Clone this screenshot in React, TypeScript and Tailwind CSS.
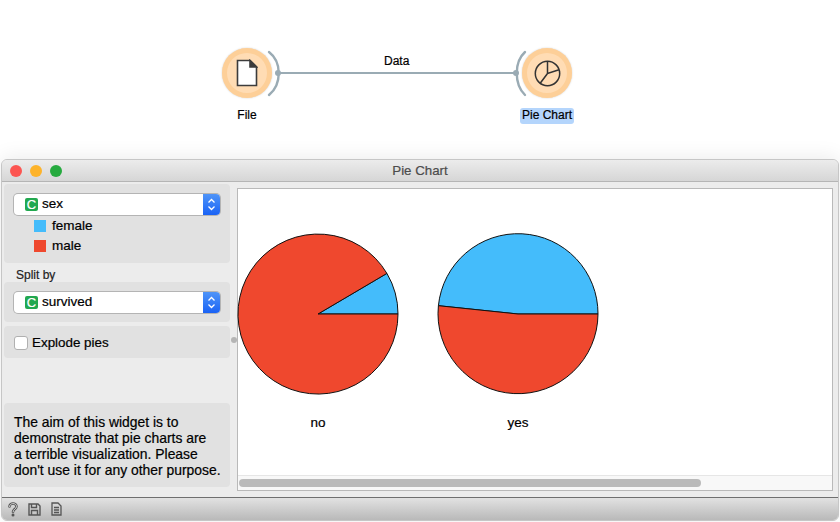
const sans = "font-['Liberation_Sans','Arial',sans-serif]";

function ComboBox({ label }: { label: string }) {
  return (
    <div className="flex h-[21px] rounded-[4px] bg-white shadow-[0_0_0_1px_#b4b4b4]">
      <div className="flex flex-1 items-center pl-[11px]">
        <span className="flex h-[13px] w-[13px] items-center justify-center rounded-[2px] bg-[#22a84f] text-[13px] leading-none text-white">
          C
        </span>
        <span className="-mt-[1px] ml-[4px] text-[13.5px] leading-none text-black">{label}</span>
      </div>
      <div className="flex w-[17px] items-center justify-center rounded-r-[4px] bg-gradient-to-b from-[#4f94f8] to-[#1a62f5]">
        <svg width="9" height="15" viewBox="0 0 9 15" fill="none" stroke="white" strokeWidth="1.3">
          <path d="M1.5 5.5 4.5 2.5 7.5 5.5" />
          <path d="M1.5 9.5 4.5 12.5 7.5 9.5" />
        </svg>
      </div>
    </div>
  );
}

function Node({ children, label, selected }: { children: React.ReactNode; label: string; selected?: boolean }) {
  return (
    <div className="flex w-[100px] flex-col items-center">
      <div className="flex h-[50px] w-[50px] items-center justify-center rounded-full bg-[#ffdcb4] shadow-[inset_0_0_0_5px_#fdcf98,0_0_2px_#cccccc]">
        {children}
      </div>
      <span
        className={`mt-[10px] rounded-[3px] px-[2px] text-[12px] leading-[15px] pb-[1px] text-black ${selected ? "bg-[#b4d5fc]" : ""}`}
      >
        {label}
      </span>
    </div>
  );
}

function Pie({ label, slice, male }: { label: string; slice: string; male: string }) {
  return (
    <div className="flex w-[162px] flex-col items-center">
      <svg width="162" height="162" viewBox="0 0 162 162">
        <path d={slice} fill="#44bcfb" stroke="#111" strokeWidth="1" />
        <path d={male} fill="#ef482e" stroke="#111" strokeWidth="1" />
      </svg>
      <span className="mt-[20px] text-[13.5px] leading-[16px] text-black">{label}</span>
    </div>
  );
}

export default function App() {
  return (
    <div className={`${sans} relative flex h-[522px] w-[840px] flex-col overflow-hidden bg-white [-webkit-text-stroke-width:0.2px]`}>
      {/* workflow canvas */}
      <div className="flex h-[159px] shrink-0 gap-[200px] pt-[48px] pl-[197px]">
        <div className="relative h-fit">
          <Node label="File">
            <svg width="22" height="28" viewBox="0 0 22 28" fill="#fff" stroke="#3c3c3c" strokeWidth="1.6">
              <path d="M1.5 1.5H14L20.5 8V26.5H1.5Z" />
              <path d="M14 1.5V8H20.5Z" fill="#3c3c3c" />
            </svg>
          </Node>
          <svg className="absolute left-[70px] top-[2px]" width="14" height="47" viewBox="0 0 14 47" fill="none" stroke="#9aabb4" strokeWidth="2.4" strokeLinecap="round">
            <path d="M2 2C15 12 15 34 2 45" />
          </svg>
        </div>
        <div className="relative h-fit">
          <Node label="Pie Chart" selected>
            <svg width="27" height="27" viewBox="0 0 27 27" fill="none" stroke="#333" strokeWidth="1.5">
              <circle cx="13.5" cy="13.5" r="12.2" />
              <path d="M13.5 1.3V13.5L25 9.8M13.5 13.5 6 23.5" />
            </svg>
          </Node>
          <svg className="absolute left-[16px] top-[2px]" width="14" height="47" viewBox="0 0 14 47" fill="none" stroke="#9aabb4" strokeWidth="2.4" strokeLinecap="round">
            <path d="M12 2C1 12 1 34 12 45" />
          </svg>
        </div>
      </div>

      {/* link between the two widgets */}
      <div className="absolute left-[278px] top-[72px] h-[2px] w-[238px] bg-[#9aabb4]" />
      <div className="absolute left-[275px] top-[70px] h-[6px] w-[6px] rounded-full bg-[#9aabb4]" />
      <div className="absolute left-[513px] top-[70px] h-[6px] w-[6px] rounded-full bg-[#9aabb4]" />
      <span className="absolute left-[384px] top-[54px] text-[12px] leading-[15px] text-black">Data</span>

      {/* widget window */}
      <div className="mx-[1px] flex h-[362px] shrink-0 flex-col overflow-hidden rounded-[6px] border border-[#c6c6c6] bg-[#ececec] shadow-[0_-2px_20px_rgba(0,0,0,0.08)]">
        <div className="relative flex h-[22px] shrink-0 items-center justify-center border-b border-[#b5b5b5] bg-gradient-to-b from-[#ececec] to-[#d6d6d6]">
          <div className="absolute left-[8px] top-[5px] flex gap-[8px]">
            <span className="h-[12px] w-[12px] rounded-full bg-[#fc5551]" />
            <span className="h-[12px] w-[12px] rounded-full bg-[#fdb32a]" />
            <span className="h-[12px] w-[12px] rounded-full bg-[#26aa3f]" />
          </div>
          <span className="text-[13.3px] leading-none text-[#4c4c4c]">Pie Chart</span>
        </div>

        <div className="flex min-h-0 flex-1">
          <div className="flex w-[228px] shrink-0 flex-col pt-[2px] pl-[2px]">
            <div className="h-[79px] rounded-[4px] bg-[#e1e1e1] px-[10px] pt-[10px]">
              <ComboBox label="sex" />
              <div className="mt-[1px] flex items-center pl-[20px] text-[13.5px] leading-[20px] text-black">
                <span className="mr-[6px] h-[12px] w-[12px] bg-[#44bcfb]" />
                female
              </div>
              <div className="flex items-center pl-[20px] text-[13.5px] leading-[20px] text-black">
                <span className="mr-[6px] h-[12px] w-[12px] bg-[#ef482e]" />
                male
              </div>
            </div>
            <div className="mt-[5px] pl-[12px] text-[12px] leading-[14px] text-[#222]">Split by</div>
            <div className="h-[40px] rounded-[4px] bg-[#e1e1e1] px-[10px] pt-[10px]">
              <ComboBox label="survived" />
            </div>
            <div className="mt-[4px] flex h-[32px] items-center rounded-[4px] bg-[#e1e1e1] pt-[2px] pl-[10px]">
              <span className="h-[14px] w-[14px] rounded-[3px] border border-[#b0b0b0] bg-white" />
              <span className="ml-[4px] text-[13.4px] text-black">Explode pies</span>
            </div>
            <div className="mt-auto mb-[10px] h-[84px] rounded-[4px] bg-[#e1e1e1] pl-[10px] pt-[11px] text-[13.9px] leading-[16px] text-black">
              The aim of this widget is to
              <br />
              demonstrate that pie charts are
              <br />
              a terrible visualization. Please
              <br />
              don't use it for any other purpose.
            </div>
          </div>

          <div className="flex w-[7px] shrink-0 items-center justify-center">
            <span className="h-[6px] w-[6px] rounded-full bg-[#b5b5b5]" />
          </div>

          <div className="mt-[6px] mb-[6px] flex min-w-0 flex-1 flex-col border border-[#b9b9b9] bg-white">
            <div className="flex flex-1 pt-[44px]">
              <div className="-ml-[1px] flex gap-[38px]">
                <Pie
                  label="no"
                  slice="M81 81H161A80 80 0 0 0 149.9 40.4Z"
                  male="M81 81L149.9 40.4A80 80 0 1 0 161 81Z"
                />
                <Pie
                  label="yes"
                  slice="M81 81H161A80 80 0 0 0 1.4 72.7Z"
                  male="M81 81L1.4 72.7A80 80 0 1 0 161 81Z"
                />
              </div>
            </div>
            <div className="flex h-[15px] shrink-0 items-center border-t border-[#e6e6e6] bg-[#f8f8f8] pl-[1px]">
              <span className="h-[8px] w-[462px] rounded-full bg-[#bababa]" />
            </div>
          </div>
          <div className="w-[5px] shrink-0" />
        </div>

        <div className="flex h-[23px] shrink-0 items-center border-t border-[#6f6f6f] bg-gradient-to-b from-[#e2e2e2] to-[#b9b9b9] pl-[6px]">
          <svg width="10" height="15" viewBox="0 0 10 15" fill="none" strokeLinecap="round">
            <path d="M1.5 4.5C1.5 0.5 8.5 0.5 8.5 4.5 8.5 7 5 7 5 10" stroke="#555" strokeWidth="2.6" />
            <path d="M1.5 4.5C1.5 0.5 8.5 0.5 8.5 4.5 8.5 7 5 7 5 10" stroke="#e0e0e0" strokeWidth="0.9" />
            <circle cx="5" cy="13" r="1.5" fill="#555" />
          </svg>
          <svg className="ml-[10px]" width="13" height="13" viewBox="0 0 13 13" fill="none" stroke="#555" strokeWidth="1.4">
            <path d="M1 1H10L12 3V12H1Z" />
            <path d="M3.5 1V4.5H8.5V1M3.5 12V7.5H9.5V12" />
          </svg>
          <svg className="ml-[10px]" width="11" height="14" viewBox="0 0 11 14" fill="none" stroke="#555" strokeWidth="1.3">
            <path d="M1 1H7L10 4V13H1Z" />
            <path d="M3 5.5H8M3 8H8M3 10.5H8" />
          </svg>
        </div>
      </div>
    </div>
  );
}
